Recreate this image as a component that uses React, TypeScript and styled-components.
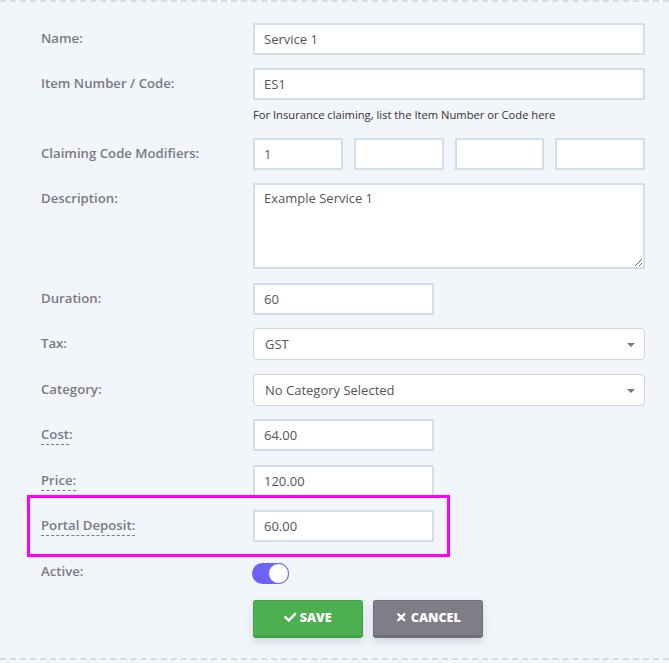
import styled, { createGlobalStyle } from 'styled-components';
import { FaCheck, FaTimes } from 'react-icons/fa';

const GlobalStyle = createGlobalStyle`
  html, body {
    margin: 0;
    padding: 0;
    background: #f2f5fa;
    font-family: 'Open Sans', 'Liberation Sans', sans-serif;
  }
`;

const Panel = styled.div`
  border-top: 2px dashed #d5dce8;
  border-bottom: 2px dashed #d5dce8;
  padding: 20.5px 24px 20px 41px;
  background: #f2f5fa;
`;

const Row = styled.div<{ $highlight?: boolean }>`
  position: relative;
  display: grid;
  grid-template-columns: 212px 1fr;
  margin-bottom: 13.5px;

  ${({ $highlight }) =>
    $highlight &&
    `
    &::before {
      content: '';
      position: absolute;
      left: -14px;
      top: -15px;
      width: 423px;
      height: 62px;
      border: 3px solid #ff00ff;
      box-sizing: border-box;
      pointer-events: none;
    }
  `}
`;

const ActiveRow = styled(Row)`
  height: 32px;
  margin-bottom: 0;
`;

const Label = styled.div`
  padding-top: 6px;
  line-height: 18px;
  font-size: 13.2px;
  font-weight: 600;
  color: #7a7a86;
`;

const Tip = styled.span`
  border-bottom: 1px dashed #7a7a86;
  padding-bottom: 1px;
`;

const Control = styled.div`
  display: flex;
  flex-direction: column;
`;

const TextInput = styled.input<{ $short?: boolean }>`
  box-sizing: border-box;
  height: 32px;
  width: ${({ $short }) => ($short ? '181px' : '100%')};
  border: 2px solid #d3deeb;
  border-radius: 0;
  background: #fff;
  padding: 0 9px;
  font-family: inherit;
  font-size: 13px;
  color: #555;
  outline: none;
`;

const Modifiers = styled.div`
  display: grid;
  grid-template-columns: repeat(4, 1fr);
  gap: 11px;
`;

const TextArea = styled.textarea`
  box-sizing: border-box;
  display: block;
  height: 86px;
  width: 100%;
  border: 2px solid #d3deeb;
  background: #fff;
  padding: 4px 9px;
  font-family: inherit;
  font-size: 13px;
  color: #555;
  outline: none;
`;

const Help = styled.div`
  margin-top: 6px;
  line-height: 18px;
  font-size: 11.2px;
  color: #333;
`;

const SelectBox = styled.div`
  box-sizing: border-box;
  position: relative;
  height: 32px;
  border: 1px solid #d3d3d8;
  border-radius: 4px;
  background: #fff;
  padding: 0 11px;
  display: flex;
  align-items: center;
  font-size: 13px;
  color: #555;

  &::after {
    content: '';
    position: absolute;
    right: 9px;
    top: 14px;
    border-left: 4.5px solid transparent;
    border-right: 4.5px solid transparent;
    border-top: 4.5px solid #6b7a90;
  }
`;

const Toggle = styled.div`
  box-sizing: border-box;
  margin-top: 7px;
  margin-left: -1px;
  width: 37px;
  height: 21px;
  border-radius: 11px;
  background: #6c63f6;
  position: relative;

  &::after {
    content: '';
    position: absolute;
    right: 0;
    top: 0;
    width: 21px;
    height: 21px;
    box-sizing: border-box;
    border-radius: 50%;
    background: #fff;
    border: 1px solid #6c63f6;
  }
`;

const Actions = styled.div`
  display: flex;
  gap: 10px;
  padding-left: 212px;
  margin-top: 12px;
`;

const Button = styled.button<{ $kind: 'save' | 'cancel' }>`
  box-sizing: border-box;
  width: 110px;
  height: 38px;
  border: 1px solid ${({ $kind }) => ($kind === 'save' ? '#43a047' : '#6f6f79')};
  border-bottom-width: 3px;
  border-radius: 3px;
  background: ${({ $kind }) => ($kind === 'save' ? '#4caf50' : '#7e7d88')};
  color: #fff;
  font-family: inherit;
  font-size: 12.5px;
  font-weight: 800;
  display: flex;
  align-items: center;
  justify-content: center;
  gap: 3px;
  box-shadow: 0 4px 8px rgba(40, 50, 70, 0.15);
  cursor: pointer;

  svg {
    font-size: 12.5px;
  }
`;

const App = () => {
  return (
    <>
      <GlobalStyle />
      <Panel>
        <Row>
          <Label>Name:</Label>
          <Control>
            <TextInput readOnly value="Service 1" />
          </Control>
        </Row>
        <Row>
          <Label>Item Number / Code:</Label>
          <Control>
            <TextInput readOnly value="ES1" />
            <Help>For Insurance claiming, list the Item Number or Code here</Help>
          </Control>
        </Row>
        <Row>
          <Label>Claiming Code Modifiers:</Label>
          <Modifiers>
            {['1', '', '', ''].map((v, i) => (
              <TextInput key={i} readOnly value={v} />
            ))}
          </Modifiers>
        </Row>
        <Row>
          <Label>Description:</Label>
          <Control>
            <TextArea readOnly value="Example Service 1" />
          </Control>
        </Row>
        <Row>
          <Label>Duration:</Label>
          <Control>
            <TextInput $short readOnly value="60" />
          </Control>
        </Row>
        <Row>
          <Label>Tax:</Label>
          <SelectBox>GST</SelectBox>
        </Row>
        <Row>
          <Label>Category:</Label>
          <SelectBox>No Category Selected</SelectBox>
        </Row>
        <Row>
          <Label>
            <Tip>Cost</Tip>:
          </Label>
          <Control>
            <TextInput $short readOnly value="64.00" />
          </Control>
        </Row>
        <Row>
          <Label>
            <Tip>Price:</Tip>
          </Label>
          <Control>
            <TextInput $short readOnly value="120.00" />
          </Control>
        </Row>
        <Row $highlight>
          <Label>
            <Tip>Portal Deposit:</Tip>
          </Label>
          <Control>
            <TextInput $short readOnly value="60.00" />
          </Control>
        </Row>
        <ActiveRow>
          <Label>Active:</Label>
          <Control>
            <Toggle />
          </Control>
        </ActiveRow>
        <Actions>
          <Button $kind="save">
            <FaCheck /> SAVE
          </Button>
          <Button $kind="cancel">
            <FaTimes /> CANCEL
          </Button>
        </Actions>
      </Panel>
    </>
  );
};

export default App;
